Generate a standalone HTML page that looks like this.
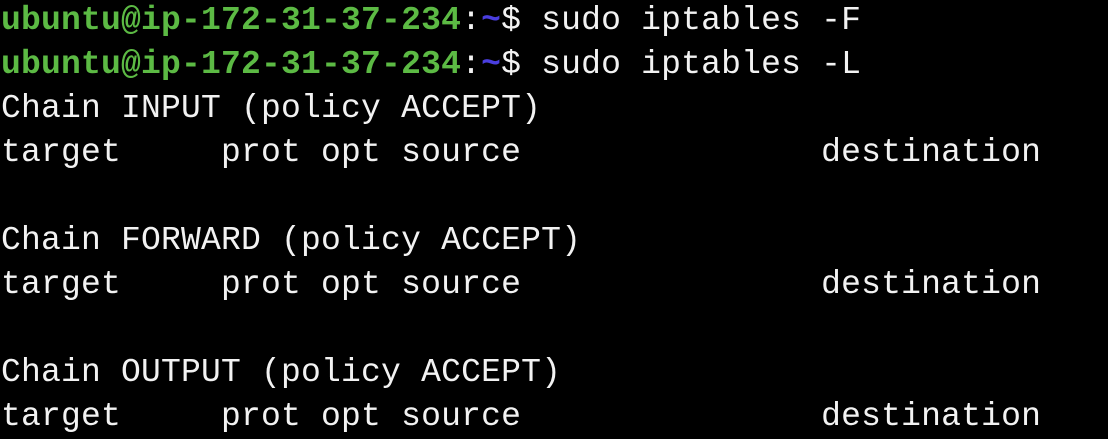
<!DOCTYPE html>
<html><head><style>
html,body{margin:0;padding:0;background:#000;width:1108px;height:438px;overflow:hidden}
pre{margin:0;position:absolute;left:1px;top:-1px;font-family:"Liberation Mono",monospace;font-size:33px;letter-spacing:0.2px;line-height:44px;color:#f2f2f2}
.g{color:#5cba44;font-weight:bold}
.b{color:#4a3ee0;font-weight:bold}
</style></head><body>
<pre><span class="g">ubuntu@ip-172-31-37-234</span>:<span class="b">~</span>$ sudo iptables -F
<span class="g">ubuntu@ip-172-31-37-234</span>:<span class="b">~</span>$ sudo iptables -L
Chain INPUT (policy ACCEPT)
target     prot opt source               destination

Chain FORWARD (policy ACCEPT)
target     prot opt source               destination

Chain OUTPUT (policy ACCEPT)
target     prot opt source               destination</pre>
</body></html>
